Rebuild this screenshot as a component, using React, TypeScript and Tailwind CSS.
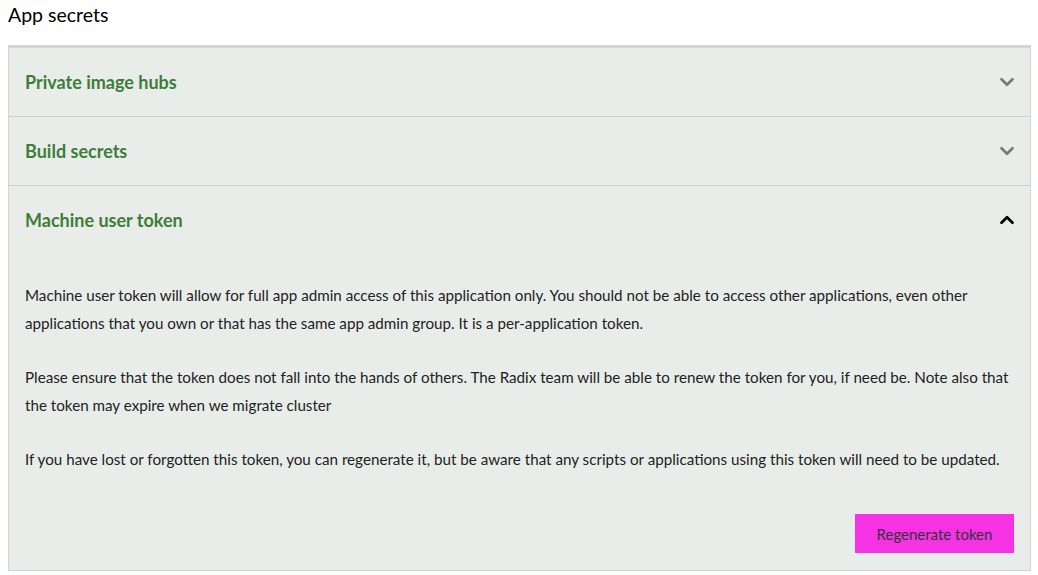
import { ChevronDown, ChevronUp } from "lucide-react";

const SECTIONS = [
  { label: "Private image hubs", open: false },
  { label: "Build secrets", open: false },
  { label: "Machine user token", open: true },
];

function Header({ label, open }: { label: string; open: boolean }) {
  return (
    <div className="flex h-[68px] items-center justify-between pl-[16px] pr-[12px]">
      <span className="text-[18px] font-bold text-[#3e7d38]">{label}</span>
      {open ? (
        <ChevronUp className="size-[22px] text-black" strokeWidth={3} />
      ) : (
        <ChevronDown className="size-[22px] text-[#7a7a7a]" strokeWidth={3} />
      )}
    </div>
  );
}

export default function App() {
  return (
    <div className="min-h-screen bg-white font-['Lato','Liberation_Sans',sans-serif] text-[#222]">
      <h1 className="px-2 pt-[2px] text-[19.5px] leading-[26px] text-black">App secrets</h1>
      <div className="ml-2 mr-[7px] mt-[17px] border border-t-[3px] border-[#d4d4d4] bg-[#e9edea]">
        {SECTIONS.map((s, i) => (
          <div key={s.label} className={i > 0 ? "border-t border-[#cfcfcf]" : ""}>
            <Header label={s.label} open={s.open} />
            {s.open && (
              <div className="px-[16px] pb-[17px] pt-[27px] text-[15.2px] leading-[28px]">
                <p>
                  Machine user token will allow for full app admin access of this application only. You should not be
                  able to access other applications, even other applications that you own or that has the same app
                  admin group. It is a per-application token.
                </p>
                <p className="mt-[26px]">
                  Please ensure that the token does not fall into the hands of others. The Radix team will be able to
                  renew the token for you, if need be. Note also that the token may expire when we migrate cluster
                </p>
                <p className="mt-[26px]">
                  If you have lost or forgotten this token, you can regenerate it, but be aware that any scripts or
                  applications using this token will need to be updated.
                </p>
                <div className="mt-[41px] flex justify-end">
                  <button className="h-[39px] w-[159px] bg-[#f533e4] text-[15px] text-[#333]">Regenerate token</button>
                </div>
              </div>
            )}
          </div>
        ))}
      </div>
    </div>
  );
}
